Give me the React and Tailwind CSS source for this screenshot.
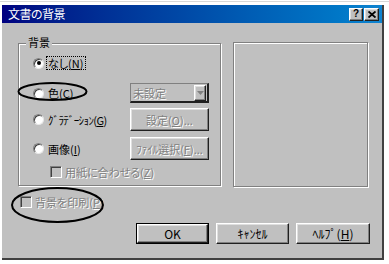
import React from "react";

const dis = "text-[#808080] [text-shadow:1px_1px_0_#fff]";
const raised =
  "border border-t-white border-l-white border-r-[#202020] border-b-[#202020] shadow-[inset_-1px_-1px_0_#808080,inset_1px_1px_0_#dfdfdf]";

function Radio({ checked }) {
  return (
    <span className="w-[11px] h-[11px] shrink-0 rounded-full bg-white border border-t-[#808080] border-l-[#808080] border-r-[#e8e8e8] border-b-[#e8e8e8] shadow-[inset_1px_1px_0_#404040] flex items-center justify-center">
      {checked && <span className="w-[4px] h-[4px] rounded-full bg-black" />}
    </span>
  );
}

function Check() {
  return (
    <span className="w-[12px] h-[12px] shrink-0 bg-[#c0c0c0] border border-t-[#808080] border-l-[#808080] border-r-white border-b-white shadow-[inset_1px_1px_0_#404040]" />
  );
}

function Btn({ children, disabled, className = "" }) {
  return (
    <div
      className={`w-[79px] h-[23px] bg-[#c0c0c0] flex items-center justify-center ${raised} ${className}`}
    >
      <span className={disabled ? dis : "text-black"}>{children}</span>
    </div>
  );
}

function U({ children }) {
  return <span className="underline underline-offset-1">{children}</span>;
}

export default function App() {
  return (
    <div className="relative w-[389px] h-[264px] bg-white overflow-hidden font-['Noto_Sans_CJK_JP','Noto_Sans',sans-serif] [font-feature-settings:'palt'] text-[11px] leading-[12px] text-black">
      <div className="h-[1px] mt-[1px] bg-[#d8d8d8]" />
      <div className="ml-[2px] mt-[3px] w-[382px] h-[255px] bg-[#c0c0c0] border-r-2 border-b-2 border-r-[#404040] border-b-[#404040] flex flex-col">
        {/* title bar */}
        <div className="h-[18px] shrink-0 bg-gradient-to-r from-[#000080] to-[#1084d0] flex items-center justify-between pl-[6px] pr-[3px]">
          <span className="text-white text-[12px] tracking-[-0.5px]">文書の背景</span>
          <div className="flex gap-[1px]">
            <div className={`w-[14px] h-[13px] bg-[#c0c0c0] flex items-center justify-center ${raised}`}>
              <span className="text-[10px] leading-[10px] font-bold font-['Liberation_Sans',sans-serif]">?</span>
            </div>
            <div className={`w-[15px] h-[13px] bg-[#c0c0c0] flex items-center justify-center ${raised}`}>
              <svg width="8" height="7" viewBox="0 0 8 7">
                <path d="M0.5 0.5 L7.5 6.5 M7.5 0.5 L0.5 6.5" stroke="#000" strokeWidth="1.8" />
              </svg>
            </div>
          </div>
        </div>

        {/* content */}
        <div className="flex pl-[16px] mt-[20px]">
          <div className="relative w-[203px] h-[143px] border border-[#808080] shadow-[inset_1px_1px_0_#fff,1px_1px_0_#fff]">
            <span className="absolute left-[7px] top-[-8px] px-[2px] bg-[#c0c0c0]">背景</span>
            <div className="flex flex-col pl-[14px] pt-[9px]">
              <div className="flex items-center h-[20px]">
                <div className="w-[97px] flex items-center">
                  <Radio checked />
                  <span className="ml-[2px] px-[1px] border border-dotted border-black">
                    なし(<U>N</U>)
                  </span>
                </div>
              </div>
              <div className="flex items-center h-[20px] mt-[10px]">
                <div className="w-[97px] flex items-center">
                  <Radio />
                  <span className="ml-[4px]">
                    色(<U>C</U>)
                  </span>
                </div>
                <div className="w-[79px] h-[20px] flex items-center bg-[#c0c0c0] border-t border-l border-t-[#808080] border-l-[#808080] border-r-2 border-b-2 border-r-[#202020] border-b-[#202020]">
                  <span className={`flex-1 pl-[2px] ${dis}`}>未設定</span>
                  <span className={`w-[12px] h-[16px] mr-[1px] flex items-center justify-center bg-[#c0c0c0] ${raised}`}>
                    <svg width="7" height="4" viewBox="0 0 7 4">
                      <path d="M0 0 H7 L3.5 4 Z" fill="#808080" />
                    </svg>
                  </span>
                </div>
              </div>
              <div className="flex items-center h-[23px] mt-[5px]">
                <div className="w-[97px] flex items-center">
                  <Radio />
                  <span className="ml-[4px] tracking-[-0.6px]">
                    ｸﾞﾗﾃﾞｰｼｮﾝ(<U>G</U>)
                  </span>
                </div>
                <Btn disabled>
                  設定(<U>O</U>)...
                </Btn>
              </div>
              <div className="flex items-center h-[23px] mt-[6px]">
                <div className="w-[97px] flex items-center">
                  <Radio />
                  <span className="ml-[4px]">
                    画像(<U>I</U>)
                  </span>
                </div>
                <Btn disabled>
                  ﾌｧｲﾙ選択(<U>F</U>)...
                </Btn>
              </div>
              <div className="flex items-center h-[16px] mt-[4px] pl-[17px]">
                <Check />
                <span className={`ml-[3px] ${dis}`}>
                  用紙に合わせる(<U>Z</U>)
                </span>
              </div>
            </div>
          </div>
          <div className="ml-[12px] -mt-[1px] w-[135px] h-[145px] border border-[#808080] shadow-[inset_1px_1px_0_#fff,1px_1px_0_#fff]" />
        </div>

        {/* print background */}
        <div className="flex items-center h-[12px] mt-[9px] pl-[18px]">
          <Check />
          <span className={`ml-[3px] ${dis}`}>
            背景を印刷(<U>P</U>)
          </span>
        </div>

        {/* bottom buttons */}
        <div className="flex justify-end gap-[7px] pr-[12px] mt-[15px] text-[12px]">
          <div className="w-[73px] h-[21px] border border-black">
            <div className={`w-full h-full bg-[#c0c0c0] flex items-center justify-center ${raised}`}>OK</div>
          </div>
          <div className={`w-[73px] h-[21px] bg-[#c0c0c0] flex items-center justify-center ${raised}`}>ｷｬﾝｾﾙ</div>
          <div className={`w-[74px] h-[21px] bg-[#c0c0c0] flex items-center justify-center ${raised}`}>
            <span>
              ﾍﾙﾌﾟ(<U>H</U>)
            </span>
          </div>
        </div>
      </div>

      {/* annotation ellipses */}
      <svg className="absolute left-0 top-0 pointer-events-none" width="389" height="264">
        <ellipse cx="52.5" cy="91.5" rx="34" ry="8.5" fill="none" stroke="#000" strokeWidth="2" />
        <ellipse cx="57.5" cy="205" rx="45.5" ry="17" fill="none" stroke="#000" strokeWidth="2" />
      </svg>
    </div>
  );
}
